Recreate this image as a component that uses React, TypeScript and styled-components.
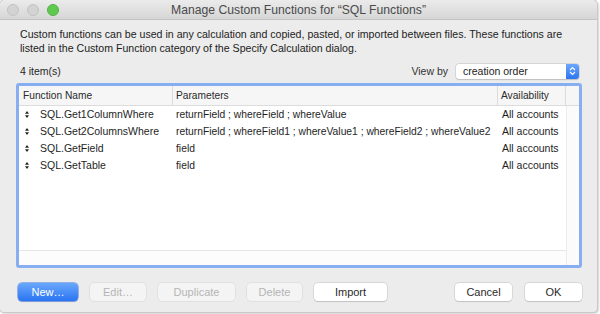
import React from "react";
import styled, { createGlobalStyle } from "styled-components";

const Global = createGlobalStyle`
  html, body { margin: 0; padding: 0; background: #ffffff; }
  body { font-family: "Liberation Sans", Arial, sans-serif; -webkit-font-smoothing: antialiased; }
  #root { width: 600px; height: 314px; overflow: hidden; }
`;

const Window = styled.div`
  width: 597px;
  height: 312px;
  background: #ececec;
  border-radius: 5px 5px 4px 4px;
  box-shadow: 0 0 0 1px #c9c9c9, 1px 1px 3px rgba(0,0,0,0.35);
  display: flex;
  flex-direction: column;
  overflow: hidden;
  color: #262626;
`;

const TitleBar = styled.div`
  height: 20px;
  flex: none;
  background: linear-gradient(#ebebeb, #d6d6d6);
  border-bottom: 1px solid #c4c4c4;
  box-sizing: border-box;
  display: flex;
  align-items: center;
  position: relative;
  padding-left: 7px;
  gap: 8px;
`;

const Light = styled.div<{ $color: string; $border: string }>`
  width: 10px;
  height: 10px;
  border-radius: 50%;
  background: ${(p) => p.$color};
  border: 1px solid ${(p) => p.$border};
`;

const Title = styled.div`
  position: absolute;
  left: 0;
  right: 0;
  top: 0;
  bottom: 0;
  display: flex;
  align-items: center;
  justify-content: center;
  font-size: 12.2px;
  color: #4a4a4a;
  pointer-events: none;
`;

const Body = styled.div`
  flex: 1;
  display: flex;
  flex-direction: column;
  padding: 7px 15px 11px 16px;
`;

const Description = styled.p`
  margin: 0 0 0 4px;
  font-size: 10.6px;
  line-height: 14px;
  color: #222;
  white-space: nowrap;
`;

const Toolbar = styled.div`
  margin-top: 8px;
  height: 16px;
  display: flex;
  align-items: center;
  padding-left: 4px;
  padding-right: 3px;
  font-size: 10.5px;
`;

const Count = styled.span`
  flex: 1;
`;

const ViewLabel = styled.span`
  margin-right: 8px;
  color: #333;
`;

const Select = styled.div`
  width: 123px;
  height: 15px;
  background: #fff;
  border-radius: 3px;
  box-shadow: 0 0 0 0.5px #c4c4c4, 0 0.5px 1px rgba(0,0,0,0.2);
  display: flex;
  align-items: center;
  overflow: hidden;
`;

const SelectText = styled.span`
  flex: 1;
  padding-left: 7px;
  font-size: 10.5px;
  color: #222;
`;

const Stepper = styled.div`
  width: 13px;
  height: 100%;
  background: linear-gradient(#6aa6fb, #2b76f1);
  display: flex;
  align-items: center;
  justify-content: center;
`;

const TableFrame = styled.div`
  margin-top: 4px;
  height: 185px;
  box-sizing: border-box;
  border: 3px solid #86aef0;
  border-radius: 3px;
  background: #fff;
  display: flex;
  flex-direction: column;
  overflow: hidden;
`;

const Grid = styled.div`
  display: grid;
  grid-template-columns: 154px 325px 68px 13px;
`;

const HeaderCell = styled.div<{ $pad?: number }>`
  height: 20px;
  box-sizing: border-box;
  background: #f6f6f6;
  border-bottom: 1px solid #dcdcdc;
  border-right: 1px solid #dcdcdc;
  display: flex;
  align-items: center;
  padding-left: ${(p) => p.$pad ?? 3}px;
  font-size: 10.2px;
  color: #2a2a2a;
  white-space: nowrap;
  &:last-child { border-right: none; }
`;

const ListArea = styled.div`
  flex: 1;
  display: grid;
  grid-template-columns: 1fr 13px;
  grid-template-rows: 1fr 14px;
`;

const Rows = styled.div`
  display: flex;
  flex-direction: column;
  border-bottom: 1px solid #e6e6e6;
`;

const VTrack = styled.div`
  background: #fbfbfb;
  border-left: 1px solid #ececec;
  grid-row: span 2;
`;

const HTrack = styled.div`
  background: #fcfcfc;
`;

const Row = styled.div`
  height: 17px;
  display: grid;
  grid-template-columns: 154px 325px 68px;
  align-items: baseline;
  line-height: 17px;
  font-size: 10.5px;
  color: #1e1e1e;
  white-space: nowrap;
`;

const NameCell = styled.div`
  display: flex;
  align-items: center;
  padding-left: 6px;
`;

const Handle = styled.svg`
  width: 4px;
  height: 7px;
  margin-right: 11px;
  flex: none;
`;

const Cell = styled.div<{ $pad?: number; $size?: number }>`
  padding-left: ${(p) => p.$pad ?? 3}px;
  font-size: ${(p) => p.$size ?? 10.5}px;
  overflow: hidden;
`;

const Buttons = styled.div`
  margin-top: 15px;
  display: flex;
  align-items: center;
  padding-left: 2px;
`;

const Button = styled.button<{ $w: number; $primary?: boolean; $gap?: number }>`
  width: ${(p) => p.$w}px;
  height: 18px;
  margin-left: ${(p) => p.$gap ?? 0}px;
  padding: 0;
  border: none;
  border-radius: 4px;
  font-family: "Liberation Sans", Arial, sans-serif;
  font-size: 11px;
  color: ${(p) => (p.$primary ? "#fff" : "#2a2a2a")};
  background: ${(p) => (p.$primary ? "linear-gradient(#6aa8fb, #2a74f2)" : "#fff")};
  box-shadow: ${(p) =>
    p.$primary
      ? "0 0 0 0.5px #3a7be8, 0 0.5px 1px rgba(0,0,0,0.2)"
      : "0 0 0 0.5px #c6c6c6, 0 0.5px 1px rgba(0,0,0,0.18)"};
  &:disabled {
    color: #b4b4b4;
    background: #f4f4f4;
    box-shadow: 0 0 0 0.5px #d4d4d4;
  }
`;

const Spacer = styled.div`
  flex: 1;
`;

const rows = [
  { name: "SQL.Get1ColumnWhere", params: "returnField ; whereField ; whereValue" },
  { name: "SQL.Get2ColumnsWhere", params: "returnField ; whereField1 ; whereValue1 ; whereField2 ; whereValue2" },
  { name: "SQL.GetField", params: "field" },
  { name: "SQL.GetTable", params: "field" },
];

export default function App() {
  return (
    <>
      <Global />
      <Window>
        <TitleBar>
          <Light $color="#d3d3d3" $border="#c2c2c2" />
          <Light $color="#d3d3d3" $border="#c2c2c2" />
          <Light $color="#5fc94f" $border="#4fb43f" />
          <Title>Manage Custom Functions for “SQL Functions”</Title>
        </TitleBar>
        <Body>
          <Description>
            Custom functions can be used in any calculation and copied, pasted, or imported between files. These functions are
            <br />
            listed in the Custom Function category of the Specify Calculation dialog.
          </Description>
          <Toolbar>
            <Count>4 item(s)</Count>
            <ViewLabel>View by</ViewLabel>
            <Select>
              <SelectText>creation order</SelectText>
              <Stepper>
                <svg width="7" height="10" viewBox="0 0 7 10">
                  <path d="M1 4 L3.5 1.5 L6 4 M1 6 L3.5 8.5 L6 6" fill="none" stroke="#fff" strokeWidth="1.1" />
                </svg>
              </Stepper>
            </Select>
          </Toolbar>
          <TableFrame>
            <Grid>
              <HeaderCell $pad={4}>Function Name</HeaderCell>
              <HeaderCell>Parameters</HeaderCell>
              <HeaderCell>Availability</HeaderCell>
              <HeaderCell />
            </Grid>
            <ListArea>
              <Rows>
                {rows.map((r) => (
                  <Row key={r.name}>
                    <NameCell>
                      <Handle viewBox="0 0 4 7">
                        <path d="M2 0 L4 2.8 L0 2.8 Z M2 7 L4 4.2 L0 4.2 Z" fill="#222" />
                      </Handle>
                      {r.name}
                    </NameCell>
                    <Cell $size={10.3}>{r.params}</Cell>
                    <Cell $pad={4}>All accounts</Cell>
                  </Row>
                ))}
              </Rows>
              <VTrack />
              <HTrack />
            </ListArea>
          </TableFrame>
          <Buttons>
            <Button $w={60} $primary>New…</Button>
            <Button $w={56} $gap={12} disabled>Edit…</Button>
            <Button $w={77} $gap={12} disabled>Duplicate</Button>
            <Button $w={55} $gap={12} disabled>Delete</Button>
            <Button $w={73} $gap={12}>Import</Button>
            <Spacer />
            <Button $w={57}>Cancel</Button>
            <Button $w={57} $gap={13}>OK</Button>
          </Buttons>
        </Body>
      </Window>
    </>
  );
}
